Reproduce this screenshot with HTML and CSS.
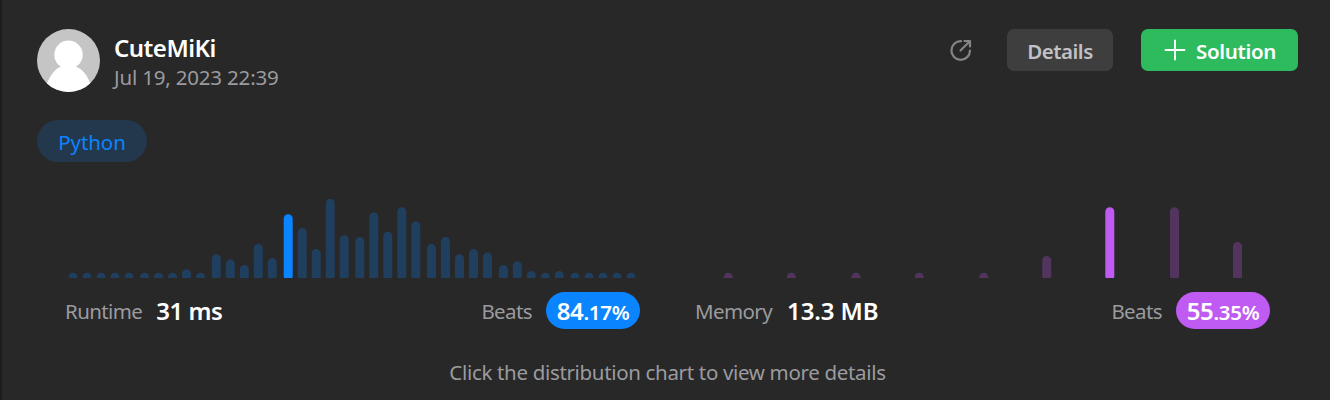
FILE: index.html
```html
<!DOCTYPE html>
<html lang="en">
<head>
<meta charset="utf-8">
<title>Submission</title>
<link rel="stylesheet" href="styles.css">
</head>
<body>
<main class="panel">
  <header class="header">
    <svg class="avatar" viewBox="0 0 63 63"><defs><clipPath id="round"><circle cx="31.5" cy="31.5" r="31.5"/></clipPath></defs><g clip-path="url(#round)"><path fill="#c5c5c5" d="M0 0h63v63H0z"/><circle cx="31.500" cy="25.700" r="14.200" fill="#fff"/><path fill="#fff" d="M9 57C13 45 20 38 25 37.500h13C44 38.500 51 46 54 57L48 63H14z"/></g></svg>
    <div class="who"><div class="name"><span>CuteMiKi</span></div><div class="date"><span>Jul 19, 2023 22:39</span></div></div>
    <svg class="share" viewBox="0 0 24 24" fill="none" stroke="#858585" stroke-width="2.200"><path d="M12 3.200A9.300 9.300 0 1 0 21 12.500M11.500 12.500L20.500 3.500M15.500 3h5.500v5.500" stroke-linecap="round" stroke-linejoin="round"/></svg>
    <button class="btn details"><span>Details</span></button>
    <button class="btn solution"><svg class="plus" viewBox="0 0 22 22"><path d="M11 1.500v19M1.500 11h19" stroke="#fff" stroke-width="1.900" stroke-linecap="round"/></svg><span>Solution</span></button>
  </header>
  <div class="tags"><span class="tag">Python</span></div>
  <div class="charts">
    <section class="chart runtime">
      <svg class="bars" viewBox="65 190 575 88">
        <path class="bar" d="M73 277.200v.01M87 277.200v.01M101 277.200v.01M115 277.200v.01M129 277.200v.01M144.500 277.200v.01M158.500 277.200v.01M172.500 277.200v.01M186.500 273.700V276M200.500 277.200v.01M216.300 258.700V276M230.300 264V276M244.300 269.500V276M258.300 248.500V276M272.300 262.500V276M302.200 232.500V276M316.200 253.500V276M330.200 203.200V276M344.200 239.700V276M359.800 241.500V276M373.800 217V276M387.800 236.200V276M401.800 211.700V276M415.800 225.800V276M431.500 248.500V276M445.500 241.500V276M459.500 258.700V276M473.500 253.500V276M487.500 257V276M503.300 269.500V276M517.300 265.700V276M531.300 275.500V276M545.300 277.200v.01M559.300 275.500V276M575 277.200v.01M589 277.200v.01M603 277.200v.01M617 277.200v.01M631 277.200v.01"/>
        <path class="bar current" d="M288.200 218.700V276"/>
      </svg>
      <div class="stats"><span class="label">Runtime</span><strong class="value">31 ms</strong><span class="label beats">Beats</span><span class="pill"><b class="whole">84</b><b class="frac">.17%</b></span></div>
    </section>
    <section class="chart memory">
      <svg class="bars" viewBox="695 190 575 88">
        <path class="bar" d="M728.300 277.200v.01M791.300 277.200v.01M856 277.200v.01M919.200 277.200v.01M983.800 277.200v.01M1046.700 260.500V276M1174.500 211.700V276M1237.500 246.500V276"/>
        <path class="bar current" d="M1109.800 211.700V276"/>
      </svg>
      <div class="stats"><span class="label">Memory</span><strong class="value">13.3 MB</strong><span class="label beats">Beats</span><span class="pill"><b class="whole">55</b><b class="frac">.35%</b></span></div>
    </section>
  </div>
  <p class="hint"><span>Click the distribution chart to view more details</span></p>
</main>
</body>
</html>
```
FILE: styles.css
```css
* { box-sizing: border-box; }
body { margin: 0; background: #282828; font-family: "Noto Sans", "Open Sans", sans-serif; font-size: 20.5px; }
.panel { width: 1330px; height: 400px; padding: 29px 32px 0 35px; border-left: 2px solid #1c1c1c; background: #282828; color: #9b9b9f; overflow: hidden; white-space: nowrap; }
.header { display: flex; height: 63px; align-items: flex-start; }
.avatar { width: 63px; height: 63px; flex: none; }
.who { margin-left: 14px; padding-top: 4px; flex: 1; }
.name { color: #fff; font-size: 24px; font-weight: 600; line-height: 30px; letter-spacing: -.5px; }
.date { line-height: 28px; letter-spacing: -.18px; }
.share { width: 24px; height: 24px; margin: 9px 34px 0 0; }
.btn { display: flex; align-items: center; justify-content: center; height: 42px; padding: 2px 0 0; border: 0; border-radius: 7px; font: 600 20.5px "Noto Sans", "Open Sans", sans-serif; letter-spacing: -.5px; }
.details { width: 106px; background: #3e3e3e; color: #c1c1c6; }
.solution { width: 157px; margin-left: 28px; padding-left: 1px; background: #2dbb5d; color: #fff; gap: 10px; letter-spacing: -.35px; }
.plus { width: 22px; height: 22px; margin-top: -3px; }
.tags { display: flex; margin-top: 28px; }
.tag { width: 110px; height: 42px; border-radius: 21px; background: #23384d; color: #0a84ff; text-align: center; line-height: 44px; letter-spacing: -.1px; }
.charts { display: flex; gap: 55px; margin: 28px 0 0 28px; }
.chart { width: 575px; }
.bars { display: block; width: 575px; height: 88px; }
.bar { fill: none; stroke-width: 9; stroke-linecap: round; }
.runtime .bar { stroke: #203f5f; }
.runtime .current { stroke: #0a84ff; }
.memory .bar { stroke: #52345f; }
.memory .current { stroke: #bf5af2; }
.stats { display: flex; align-items: center; height: 37px; margin-top: 14px; line-height: 37px; }
.label { letter-spacing: -.6px; padding-top: 2px; }
.value { margin-left: 14px; color: #fff; font-size: 24px; font-weight: 600; letter-spacing: -.5px; }
.memory .value { margin-left: 15px; letter-spacing: -.1px; }
.beats { margin-left: auto; }
.pill { display: flex; align-items: baseline; justify-content: center; width: 94px; height: 37px; margin-left: 14px; border-radius: 19px; color: #fff; font-weight: 600; }
.pill b { font-weight: 600; letter-spacing: -.3px; }
.whole { font-size: 24px; }
.runtime .pill { background: #0a84ff; }
.memory .pill { background: #bf5af2; }
.hint { margin: 28px 0 0 0; text-align: center; line-height: 30px; letter-spacing: -.33px; }
```
